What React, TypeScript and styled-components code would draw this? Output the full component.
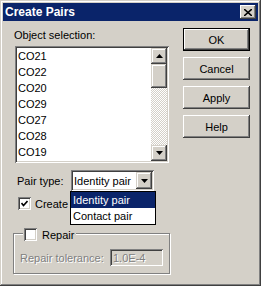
import React from 'react'
import styled, { createGlobalStyle } from 'styled-components'

const GlobalStyle = createGlobalStyle`
  html, body {
    margin: 0;
    padding: 0;
    background: #d4d0c8;
  }
  * {
    box-sizing: border-box;
  }
`

const face = '#d4d0c8'
const navy = '#0a246a'

const Window = styled.div`
  width: 261px;
  height: 286px;
  padding: 3px;
  background: ${face};
  box-shadow: inset -1px -1px #404040, inset 1px 1px ${face}, inset -2px -2px #808080,
    inset 2px 2px #fff;
  font-family: 'Liberation Sans', Arial, sans-serif;
  font-size: 11px;
  color: #000;
  white-space: nowrap;
  display: flex;
  flex-direction: column;
`

const TitleBar = styled.div`
  height: 18px;
  background: ${navy};
  display: flex;
  align-items: center;
  justify-content: space-between;
  padding: 0 2px 0 2px;
`

const Title = styled.span`
  color: #fff;
  font-weight: bold;
  font-size: 12px;
`

const CloseButton = styled.div`
  width: 16px;
  height: 14px;
  background: ${face};
  box-shadow: inset -1px -1px #404040, inset 1px 1px #fff, inset -2px -2px #808080;
  display: flex;
  align-items: center;
  justify-content: center;
`

const Body = styled.div`
  display: flex;
  padding: 7px 0 0 10px;
  gap: 13px;
`

const LeftColumn = styled.div`
  width: 157px;
  display: flex;
  flex-direction: column;
`

const Label = styled.div`
  height: 13px;
  line-height: 13px;
  margin: 1px 0 0 1px;
`

const Sunken = styled.div`
  background: #fff;
  box-shadow: inset 1px 1px #808080, inset -1px -1px #fff, inset 2px 2px #404040,
    inset -2px -2px ${face};
`

const ListBox = styled(Sunken)`
  margin: 4px 0 0 2px;
  width: 154px;
  height: 117px;
  padding: 2px;
  display: flex;
`

const Items = styled.div`
  flex: 1;
`

const Item = styled.div`
  height: 16px;
  line-height: 16px;
  padding-left: 1px;
`

const ScrollBar = styled.div`
  width: 16px;
  display: flex;
  flex-direction: column;
`

const RaisedBox = styled.div<{ $h: number }>`
  height: ${(p) => p.$h}px;
  width: 16px;
  background: ${face};
  box-shadow: inset -1px -1px #404040, inset 1px 1px ${face}, inset -2px -2px #808080,
    inset 2px 2px #fff;
  display: flex;
  align-items: center;
  justify-content: center;
  flex-shrink: 0;
`

const Track = styled.div`
  flex: 1;
  background: repeating-conic-gradient(#fff 0 25%, ${face} 0 50%) 0 0 / 2px 2px;
`

const PairRow = styled.div`
  margin-top: 7px;
  height: 21px;
  display: flex;
  align-items: center;
`

const PairLabel = styled.span`
  margin-left: 4px;
  width: 54px;
`

const ComboWrap = styled.div`
  position: relative;
`

const Combo = styled(Sunken)`
  width: 83px;
  height: 21px;
  padding: 2px;
  display: flex;
  align-items: center;
  justify-content: space-between;
`

const ComboText = styled.span`
  padding-left: 1px;
`

const DropList = styled.div`
  position: absolute;
  top: 21px;
  left: -1px;
  width: 86px;
  border: 1px solid #000;
  background: #fff;
  z-index: 2;
`

const DropItem = styled.div<{ $selected?: boolean }>`
  height: 16px;
  line-height: 16px;
  padding-left: 2px;
  background: ${(p) => (p.$selected ? navy : '#fff')};
  color: ${(p) => (p.$selected ? '#fff' : '#000')};
`

const CheckRow = styled.div`
  margin: 6px 0 0 5px;
  display: flex;
  align-items: center;
  gap: 4px;
  height: 13px;
`

const CheckBox = styled(Sunken)`
  width: 13px;
  height: 13px;
  display: flex;
  align-items: center;
  justify-content: center;
  flex-shrink: 0;
`

const GroupBox = styled.div`
  margin-top: 23px;
  height: 41px;
  border: 1px solid #808080;
  box-shadow: inset 1px 1px #fff, 1px 1px #fff;
  padding: 0 0 0 6px;
  display: flex;
  flex-direction: column;
`

const Legend = styled.div`
  margin: -6px 0 0 3px;
  padding: 0 2px 0 1px;
  background: ${face};
  align-self: flex-start;
  display: flex;
  align-items: center;
  gap: 5px;
  height: 13px;
`

const ToleranceRow = styled.div`
  margin-top: 8px;
  display: flex;
  align-items: center;
`

const DisabledText = styled.span`
  color: #808080;
  text-shadow: 1px 1px #fff;
`

const ToleranceLabel = styled(DisabledText)`
  width: 90px;
`

const ToleranceInput = styled(Sunken)`
  width: 53px;
  height: 17px;
  background: ${face};
  padding: 0 3px;
  display: flex;
  align-items: center;
`

const RightColumn = styled.div`
  display: flex;
  flex-direction: column;
  gap: 6px;
`

const Button = styled.div<{ $default?: boolean }>`
  width: 67px;
  height: 23px;
  background: ${face};
  display: flex;
  align-items: center;
  justify-content: center;
  border: ${(p) => (p.$default ? '1px solid #000' : 'none')};
  box-shadow: inset -1px -1px #404040, inset 1px 1px #fff, inset -2px -2px #808080,
    inset 2px 2px ${face};
`

const UpArrow = () => (
  <svg width="7" height="4" viewBox="0 0 7 4">
    <polygon points="3.5,0 7,4 0,4" fill="#000" />
  </svg>
)

const DownArrow = () => (
  <svg width="7" height="4" viewBox="0 0 7 4">
    <polygon points="0,0 7,0 3.5,4" fill="#000" />
  </svg>
)

const CloseGlyph = () => (
  <svg width="8" height="7" viewBox="0 0 8 7">
    <path d="M0 0 L8 7 M8 0 L0 7" stroke="#000" strokeWidth="1.6" />
  </svg>
)

const CheckMark = () => (
  <svg width="7" height="7" viewBox="0 0 7 7">
    <polyline points="0.5,3 2.5,5.5 6.5,1" fill="none" stroke="#000" strokeWidth="1.6" />
  </svg>
)

const objects = ['CO21', 'CO22', 'CO20', 'CO29', 'CO27', 'CO28', 'CO19']
const buttons = ['OK', 'Cancel', 'Apply', 'Help']

const App = () => {
  return (
    <>
      <GlobalStyle />
      <Window>
        <TitleBar>
          <Title>Create Pairs</Title>
          <CloseButton>
            <CloseGlyph />
          </CloseButton>
        </TitleBar>
        <Body>
          <LeftColumn>
            <Label>Object selection:</Label>
            <ListBox>
              <Items>
                {objects.map((o) => (
                  <Item key={o}>{o}</Item>
                ))}
              </Items>
              <ScrollBar>
                <RaisedBox $h={16}>
                  <UpArrow />
                </RaisedBox>
                <RaisedBox $h={24} />
                <Track />
                <RaisedBox $h={16}>
                  <DownArrow />
                </RaisedBox>
              </ScrollBar>
            </ListBox>
            <PairRow>
              <PairLabel>Pair type:</PairLabel>
              <ComboWrap>
                <Combo>
                  <ComboText>Identity pair</ComboText>
                  <RaisedBox $h={17}>
                    <DownArrow />
                  </RaisedBox>
                </Combo>
                <DropList>
                  <DropItem $selected>Identity pair</DropItem>
                  <DropItem>Contact pair</DropItem>
                </DropList>
              </ComboWrap>
            </PairRow>
            <CheckRow>
              <CheckBox>
                <CheckMark />
              </CheckBox>
              <span>Create</span>
            </CheckRow>
            <GroupBox>
              <Legend>
                <CheckBox />
                <span>Repair</span>
              </Legend>
              <ToleranceRow>
                <ToleranceLabel>Repair tolerance:</ToleranceLabel>
                <ToleranceInput>
                  <DisabledText>1.0E-4</DisabledText>
                </ToleranceInput>
              </ToleranceRow>
            </GroupBox>
          </LeftColumn>
          <RightColumn>
            {buttons.map((b) => (
              <Button key={b} $default={b === 'OK'}>
                {b}
              </Button>
            ))}
          </RightColumn>
        </Body>
      </Window>
    </>
  )
}

export default App
